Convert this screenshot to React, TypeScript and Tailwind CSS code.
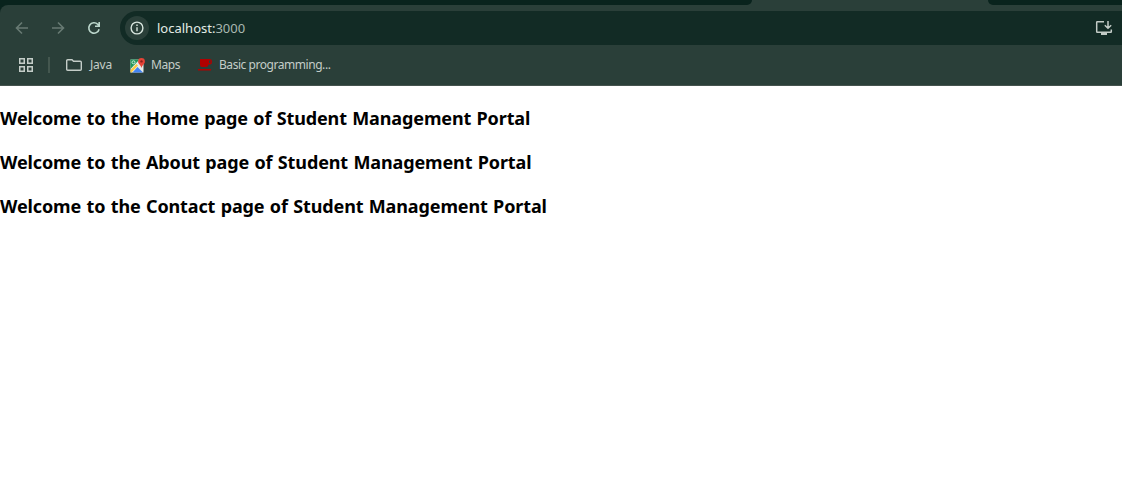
import React from "react";

const pages = ["Home", "About", "Contact"];

function TabStrip() {
  return (
    <div className="flex h-[5px] bg-[#2a3f39]">
      <div className="h-[5px] w-[752px] rounded-br-[6px] bg-[#09231d]" />
      <div className="h-[5px] w-[236px]" />
      <div className="h-[5px] flex-1 rounded-bl-[6px] bg-[#09231d]" />
    </div>
  );
}

function Toolbar() {
  return (
    <div className="flex h-[46px] items-center">
      <svg className="ml-[14px] h-4 w-4 shrink-0" viewBox="0 0 16 16" fill="none" stroke="#687a73" strokeWidth="1.6">
        <path d="M14 8H3M8 2.500L2.500 8L8 13.500" />
      </svg>
      <svg className="ml-5 h-4 w-4 shrink-0" viewBox="0 0 16 16" fill="none" stroke="#687a73" strokeWidth="1.6">
        <path d="M2 8h11M8 2.500L13.500 8L8 13.500" />
      </svg>
      <svg className="ml-5 h-4 w-4 shrink-0" viewBox="0 0 16 16" fill="none" stroke="#bcd7cc" strokeWidth="1.600">
        <path d="M13.100 9.200A5.200 5.200 0 1 1 11.700 4.300L13 5.600M13.200 2v4.200H9" />
      </svg>
      <div className="ml-[18px] flex h-[34px] flex-1 items-center rounded-l-full bg-[#122b25] pl-[5px]">
        <div className="flex h-6 w-6 items-center justify-center rounded-full bg-[#2a3f39]">
          <svg className="h-[14px] w-[14px]" viewBox="0 0 14 14" fill="none" stroke="#d9e6df" strokeWidth="1.4">
            <circle cx="7" cy="7" r="5.900" />
            <path d="M7 6.300v4M7 3.600v1.400" />
          </svg>
        </div>
        <span className="ml-2 pt-px font-['Noto_Sans',sans-serif] text-[13px] text-[#a9b8b1]">
          <span className="text-[#e3ebe6]">localhost:</span>3000
        </span>
        <svg className="mr-[9px] ml-auto h-4 w-[18px]" viewBox="0 0 18 16" fill="none" stroke="#c2cbc6" strokeWidth="1.500">
          <path d="M9 1.800H2.200Q1.700 1.800 1.700 2.300V11.700Q1.700 12.200 2.200 12.200H15.800Q16.300 12.200 16.300 11.700V9.500M13 1v7M9.800 5.200L13 8.200L16.200 5.200" />
          <path d="M6 13h6v2H6z" fill="#c2cbc6" stroke="none" />
        </svg>
      </div>
    </div>
  );
}

function Bookmarks() {
  return (
    <div className="flex h-[35px] items-center border-b border-[#45534e] pb-[6px] font-['Noto_Sans',sans-serif] text-[12px] text-[#c4cdc8]">
      <svg className="ml-[19px] h-[14px] w-[14px] shrink-0" viewBox="0 0 14 14" fill="none" stroke="#c4cdc8" strokeWidth="1.500">
        <path d="M.75.75h4.500v4.500H.75zM8.750.75h4.500v4.500h-4.500zM.75 8.750h4.500v4.500H.75zM8.750 8.750h4.500v4.500h-4.500z" />
      </svg>
      <div className="ml-[15px] h-4 w-[2px] bg-[#44574f]" />
      <svg className="ml-4 h-[14px] w-4 shrink-0" viewBox="0 0 16 14" fill="none" stroke="#c4cdc8" strokeWidth="1.400">
        <path d="M1.700 1.700H6L7.500 3.200H14.300Q15.300 3.200 15.300 4.200V11.300Q15.300 12.300 14.300 12.300H1.700Q.7 12.300.7 11.300V2.700Q.7 1.700 1.700 1.700z" />
      </svg>
      <span className="ml-2 w-10 whitespace-nowrap tracking-[-0.2px]">Java</span>
      <svg className="h-[15px] w-[15px] shrink-0" viewBox="0 0 15 15">
        <path d="M.5 1.500h13v13H.5z" fill="#e7ece8" />
        <path d="M.5 1.500h9L.5 11z" fill="#21985a" />
        <path d="M2.500 14.500L7.500 9L13 14.500z" fill="#4285f4" />
        <path d="M.5 12L6.500 6L8 7.500L1.500 14.500H.5z" fill="#fbc940" />
        <circle cx="3.500" cy="4.300" r="1.500" fill="none" stroke="#d6eee0" strokeWidth=".9" />
        <path d="M11.500 0A3.400 3.400 0 0 0 8.100 3.400C8.100 6 10.800 6.500 11.500 10C12.200 6.500 14.900 6 14.900 3.400A3.400 3.400 0 0 0 11.500 0z" fill="#e54336" />
        <circle cx="11.500" cy="3.400" r="1.200" fill="#8b211b" />
      </svg>
      <span className="ml-[6px] w-[47px] whitespace-nowrap tracking-[-0.4px]">Maps</span>
      <svg className="h-[14px] w-[14px] shrink-0" viewBox="0 0 14 14">
        <path d="M2 1H12Q14 1 14 3.700T12 6.500H10.500Q10 9 8 9H4Q2 9 2 7z" fill="#b00000" />
        <path d="M11 2.500h1.300v2.500H11z" fill="#2a3f39" />
        <path d="M0 11h13v1.500H0z" fill="#b00000" />
      </svg>
      <span className="ml-[7px] whitespace-nowrap tracking-[-0.45px]">Basic programming...</span>
    </div>
  );
}

export default function App() {
  return (
    <div className="flex h-[504px] w-full flex-col overflow-hidden bg-white">
      <div className="shrink-0 bg-[#09231d]">
        <TabStrip />
        <div className="rounded-tl-[8px] bg-[#2a3f39]">
          <Toolbar />
          <Bookmarks />
        </div>
      </div>
      <main className="flex flex-col gap-5 pt-5 font-['Noto_Sans',sans-serif] text-black">
        {pages.map((page) => (
          <h3 key={page} className="h-6 text-[18px] leading-6 font-bold tracking-[-0.12px] whitespace-nowrap [word-spacing:0.8px]">
            Welcome to the {page} page of Student Management Portal
          </h3>
        ))}
      </main>
    </div>
  );
}
